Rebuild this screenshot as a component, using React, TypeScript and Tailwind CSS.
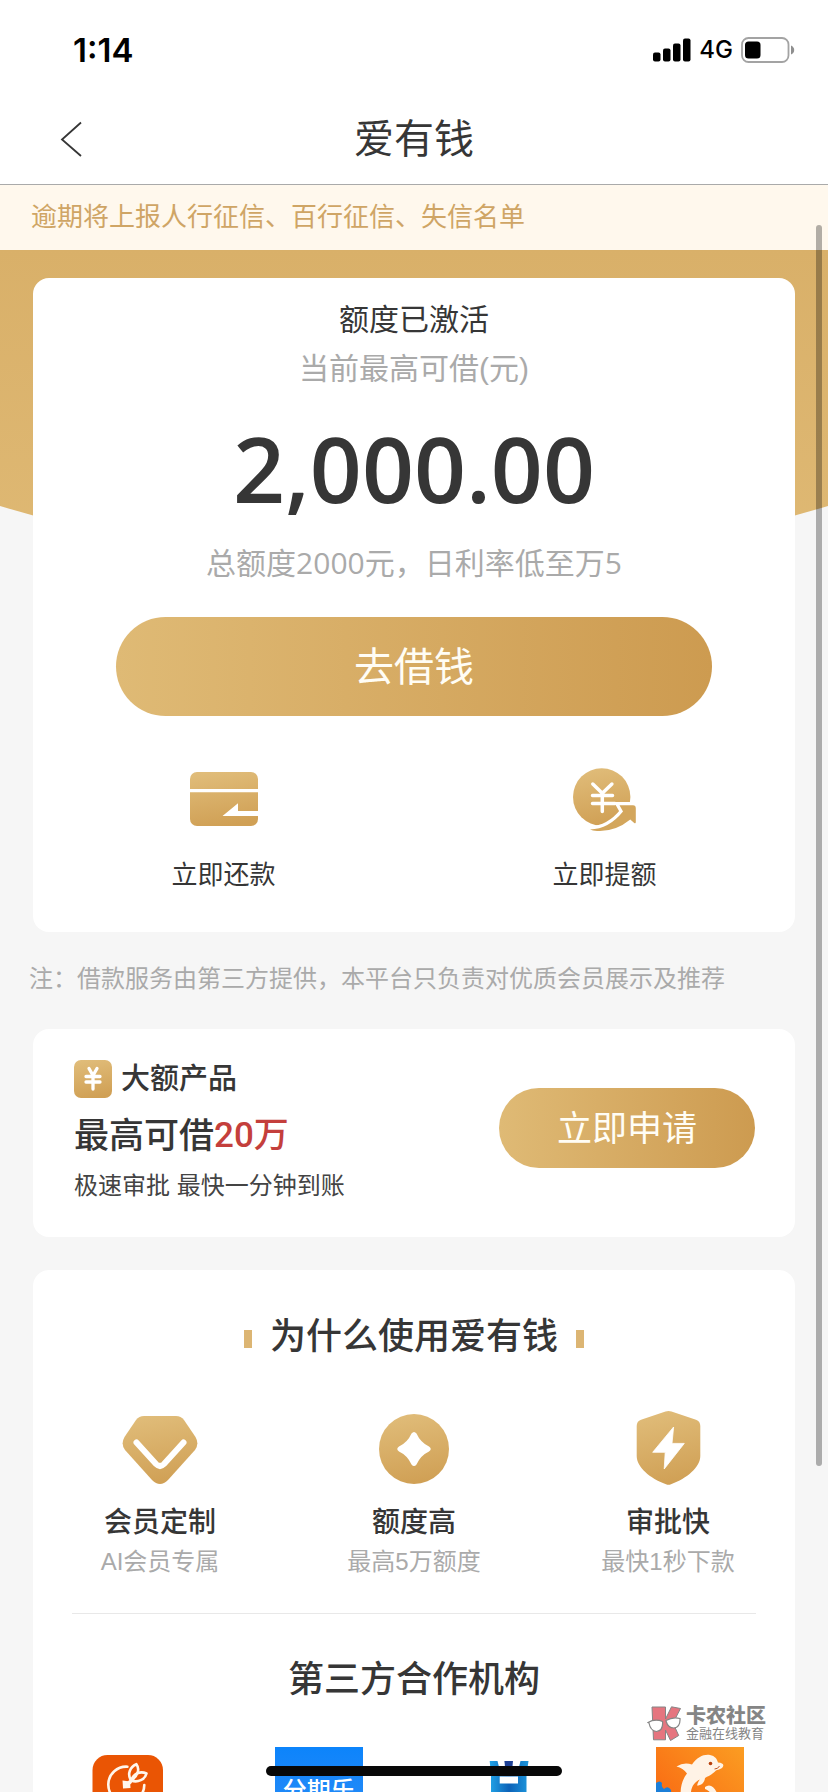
import React from "react";

function GoldGradient({ id }: { id: string }) {
  return (
    <defs>
      <linearGradient id={id} x1="0.3" y1="0" x2="0.5" y2="1">
        <stop offset="0" stopColor="#e0bc79" />
        <stop offset="1" stopColor="#d0a055" />
      </linearGradient>
    </defs>
  );
}

function RepayIcon() {
  return (
    <svg className="h-16 w-[68px]" viewBox="0 0 68 64" aria-hidden="true">
      <GoldGradient id="g-repay" />
      <rect x="0" y="4" width="68" height="54" rx="7" fill="url(#g-repay)" />
      <path d="M0 21H68V24.3H0Z" fill="#fff" />
      <path d="M32.5 48 48 35.3V43H68V48Z" fill="#fff" />
    </svg>
  );
}

function RaiseIcon() {
  const arrow =
    "M48 37.3H60Q62.8 37.3 62.8 40.5V54Q62.8 56 61.2 55L57.3 51.5Q42 64 24 62.9Q19.5 62.5 17 61.4Q36 61 50 43.5L46.5 37.3Z";
  return (
    <svg className="h-16 w-16" viewBox="0 0 64 64" aria-hidden="true">
      <GoldGradient id="g-raise" />
      <circle cx="28.7" cy="28.9" r="28.7" fill="url(#g-raise)" />
      <path d={arrow} fill="#fff" stroke="#fff" strokeWidth="6.5" />
      <path
        d="M19.8 16 29.3 25.2 38.9 16M19.5 27.6H39.5M19.5 35.5H42M29.3 25.2V43.5"
        fill="none"
        stroke="#fff"
        strokeWidth="3.5"
        strokeLinecap="round"
        strokeLinejoin="round"
      />
      <path d={arrow} fill="#d3a65c" />
    </svg>
  );
}

function YuanBadge() {
  return (
    <svg className="size-[38px] shrink-0" viewBox="0 0 38 38" aria-hidden="true">
      <GoldGradient id="g-yuan" />
      <rect width="38" height="38" rx="7" fill="url(#g-yuan)" />
      <path
        d="M15 8.500 19 15.500 23 8.500M12 16.500H26M12 22H26M19 15.500V29"
        fill="none"
        stroke="#fff"
        strokeWidth="3.300"
        strokeLinecap="round"
        strokeLinejoin="round"
      />
    </svg>
  );
}

function DiamondIcon() {
  return (
    <svg className="size-[76px]" viewBox="0 0 76 76" aria-hidden="true">
      <GoldGradient id="g-diamond" />
      <path
        d="M22 6H54Q59 6 62 10L73.500 27Q77.500 34 73 40L46 70Q38 78 30 70L3 40Q-1.500 34 2.500 27L14 10Q17 6 22 6Z"
        fill="url(#g-diamond)"
      />
      <path
        d="M14.500 32.500 34 54Q38 58 42 54L61.500 32.500"
        fill="none"
        stroke="#fff"
        strokeWidth="6"
        strokeLinecap="round"
      />
    </svg>
  );
}

function StarIcon() {
  return (
    <svg className="size-[76px]" viewBox="0 0 76 76" aria-hidden="true">
      <GoldGradient id="g-star" />
      <circle cx="38" cy="39" r="35" fill="url(#g-star)" />
      <path
        d="M35.500 23.500Q38 20.500 40.500 23.500Q44.500 32.500 53 36.500Q56.500 39 53 41.500Q44.500 45.500 40.500 54.500Q38 57.500 35.500 54.500Q31.500 45.500 23 41.500Q19.500 39 23 36.500Q31.500 32.500 35.500 23.500Z"
        fill="#fff"
      />
    </svg>
  );
}

function ShieldIcon() {
  return (
    <svg className="size-[76px]" viewBox="0 0 76 76" aria-hidden="true">
      <GoldGradient id="g-shield" />
      <path
        d="M35.500 1.600Q38.500 .6 41.500 1.600L66 9.700Q70.300 11.300 70.300 16V46C70.300 57 57 68.500 41 74.200Q38.500 75.200 36 74.200C20 68.500 6.700 57 6.700 46V16Q6.700 11.300 11 9.700Z"
        fill="url(#g-shield)"
      />
      <path
        d="M43.600 17 42 33.400H54.300L34.200 59 35.200 42.300H22.700Z"
        fill="#fff"
        stroke="#fff"
        strokeWidth="0.8"
        strokeLinejoin="round"
      />
    </svg>
  );
}

function OrangeLogo() {
  return (
    <svg className="size-[88px]" viewBox="0 0 88 88" aria-hidden="true">
      <rect x="8.500" y="8" width="70.500" height="70.500" rx="15" fill="#ea5504" />
      <g fill="none" stroke="#fff6ec" strokeWidth="2.600" strokeLinecap="round" strokeLinejoin="round">
        <path d="M43.400 19.700A18 18 0 1 0 60.300 38" />
        <path d="M47 33.500C43 27 46 20 52.400 17.200C56 22 54 29 47 33.500Z" />
        <path d="M47 33.500C50 26.500 56 23.500 62.500 26.500C61 32.500 54 36 47 33.500Z" />
        <path d="M46 35 43 37.500" strokeWidth="4" />
      </g>
      <path d="M38.500 33.500 46 34.500 46.500 41 39 41.500Z" fill="#fff6ec" />
    </svg>
  );
}

function FenqileLogo() {
  return (
    <div className="flex size-[88px] justify-center bg-linear-to-b from-[#0c84fb] to-[#2a8df5] pt-[26px] text-[24px] leading-[36px] font-medium text-white">
      分期乐
    </div>
  );
}

function BlueLogo() {
  return (
    <svg className="size-[88px]" viewBox="0 0 88 88" aria-hidden="true">
      <defs>
        <linearGradient id="g-blue" x1="0" y1="0" x2="1" y2="0">
          <stop offset="0" stopColor="#22a3e6" />
          <stop offset="0.5" stopColor="#0c62b8" />
          <stop offset="1" stopColor="#1d96dc" />
        </linearGradient>
      </defs>
      <path
        d="M24.700 14H32.500L35 24H53L55.500 14H63.500L61.500 28V70H54V45H33.500V70H26V28ZM34.700 29.500V36.500H53V29.500Z"
        fill="url(#g-blue)"
        fillRule="evenodd"
      />
      <path d="M39.400 14H48L47 24H40.500Z" fill="#1c3f94" />
    </svg>
  );
}

function DolphinLogo() {
  return (
    <svg className="size-[88px]" viewBox="0 0 88 88" aria-hidden="true">
      <defs>
        <linearGradient id="g-dolphin" x1="1" y1="0" x2="0.2" y2="0.8">
          <stop offset="0" stopColor="#fb9d22" />
          <stop offset="1" stopColor="#f96a13" />
        </linearGradient>
      </defs>
      <rect width="88" height="88" fill="url(#g-dolphin)" />
      <path
        d="M20.500 19.500Q28 14.500 36 17.500C41 10 48 7 54 8C59 9 61 12 62 15.500Q67.500 16 67.300 18.500C67 21.500 63 22.500 60 23.500C56 28 51 29.500 49 31C48.500 36 45 38.500 41 38.500C42 35 43 33.500 44 32.500C38 35 34 41 35 50L26 56C23 45 25 34 31 26.500Q27 21 20.500 19.500Z"
        fill="#fff3e6"
      />
      <circle cx="54.500" cy="16.500" r="1.800" fill="#b8400c" />
      <path d="M58.500 22Q62 22 63.500 19" stroke="#b8400c" strokeWidth="0.900" fill="none" />
      <path d="M49 40C54 36 60 40 62 50H56C55 45 52 43 49 42Z" fill="#fff3e6" />
      <path d="M0 36Q4 33 6 36Q5 40 8 42Q12 38 15 43L16 60H0Z" fill="#1c7fd8" />
    </svg>
  );
}

function Watermark() {
  return (
    <div className="pointer-events-none absolute right-[62px] bottom-[50px] flex items-center gap-1 text-[#858585]">
      <svg className="h-9 w-[35px]" viewBox="0 0 35 36" aria-hidden="true">
        <path
          d="M5 1H18.500V13L24.500 .8 33.500 2.500 26 17 31.700 29.500 23.500 34.500 18.500 24V33.800H6.500Z"
          fill="#e5757f"
          stroke="#858585"
          strokeWidth="1"
        />
        <path
          d="M1 16.500Q8 12.500 15.500 15.500Q16.500 24.500 9.500 25.500Q3.500 25 2 17ZM19 14.500Q26 10.500 33 12.500Q33.500 21 27 22Q21 22 19 15Z"
          fill="#fff"
          stroke="#858585"
          strokeWidth="1.200"
        />
      </svg>
      <div className="flex flex-col">
        <span className="text-[20px] leading-[20px] font-black">卡农社区</span>
        <span className="text-[13px] leading-[16px]">金融在线教育</span>
      </div>
    </div>
  );
}

function StatusBar() {
  return (
    <div className="flex h-[94px] items-center justify-between pt-[6px] pr-[33px] pl-[73px] text-black">
      <span className="font-['Inter',sans-serif] text-[33px] leading-[40px] font-semibold">1:14</span>
      <div className="flex items-center gap-2">
        <svg className="h-6 w-[38px]" viewBox="0 0 38 24" aria-hidden="true">
          <rect x="0" y="14.500" width="7.500" height="9" rx="2" />
          <rect x="10" y="10.500" width="7.500" height="13" rx="2" />
          <rect x="20" y="5.500" width="7.500" height="18" rx="2" />
          <rect x="30" y="0.500" width="7.500" height="23" rx="2" />
        </svg>
        <span className="font-['Inter',sans-serif] text-[24px] leading-[28px] font-medium">4G</span>
        <svg className="h-[26px] w-[54px]" viewBox="0 0 54 26" aria-hidden="true">
          <rect x="1" y="1" width="46.500" height="24" rx="6.500" fill="none" stroke="#a3a3a3" strokeWidth="1.800" />
          <rect x="4" y="4.500" width="15.500" height="17" rx="3.500" />
          <path d="M50 8.500Q53.200 10 53.200 13T50 17.500Z" fill="#8f8f8f" />
        </svg>
      </div>
    </div>
  );
}

const actions = [
  { label: "立即还款", icon: <RepayIcon /> },
  { label: "立即提额", icon: <RaiseIcon /> },
];

const features = [
  { title: "会员定制", text: "AI会员专属", icon: <DiamondIcon /> },
  { title: "额度高", text: "最高5万额度", icon: <StarIcon /> },
  { title: "审批快", text: "最快1秒下款", icon: <ShieldIcon /> },
];

const partners = [<OrangeLogo />, <FenqileLogo />, <BlueLogo />, <DolphinLogo />];

export default function App() {
  return (
    <div className="relative flex h-screen flex-col overflow-hidden bg-[#f6f6f6] font-['Liberation_Sans','Noto_Sans_CJK_SC',sans-serif] text-[#363636]">
      <header className="shrink-0 bg-white">
        <StatusBar />
        <nav className="grid h-[91px] grid-cols-[1fr_auto_1fr] items-center border-b border-[#aaa] pl-[60px]">
          <button type="button" aria-label="返回" className="w-6">
            <svg className="h-9 w-6" viewBox="0 0 24 36" fill="none" stroke="#363636" strokeWidth="1.800" aria-hidden="true">
              <path d="M21 1.500 2 18.500 21 35" />
            </svg>
          </button>
          <h1 className="-ml-[60px] text-[40px] leading-[56px]">爱有钱</h1>
        </nav>
      </header>

      <p className="h-[65px] shrink-0 bg-[#fff8ed] px-[31px] text-[26px] leading-[65px] text-[#cfa565]">
        逾期将上报人行征信、百行征信、失信名单
      </p>

      <main className="relative min-h-0 flex-1 overflow-hidden pt-[28px]">
        <svg
          className="absolute inset-x-0 top-0 h-[330px] w-full"
          viewBox="0 0 828 330"
          preserveAspectRatio="none"
          aria-hidden="true"
        >
          <defs>
            <linearGradient id="g-banner" x1="0" y1="0" x2="0" y2="1">
              <stop offset="0" stopColor="#d9b069" />
              <stop offset="1" stopColor="#dfb974" />
            </linearGradient>
          </defs>
          <path d="M0 0H828V256Q414 380 0 256Z" fill="url(#g-banner)" />
        </svg>

        <section className="relative mx-[33px] rounded-2xl bg-white pt-[21px] pb-[39px] text-center">
          <h2 className="text-[30px] leading-[42px]">额度已激活</h2>
          <p className="mt-[7px] text-[30px] leading-[42px] text-[#aaa]">当前最高可借(元)</p>
          <p className="mt-[30px] font-['Open_Sans',sans-serif] text-[91px] leading-[96px] font-semibold">2,000.00</p>
          <p className="mt-[26px] font-['Open_Sans','Noto_Sans_CJK_SC',sans-serif] text-[30px] leading-[42px] text-[#aaa]">
            总额度2000元，日利率低至万5
          </p>
          <div className="mt-[33px] px-[83px]">
            <button
              type="button"
              className="h-[99px] w-full rounded-full bg-linear-to-r from-[#dfba75] to-[#cd9b50] text-[40px] leading-[56px] text-[#fffdf5]"
            >
              去借钱
            </button>
          </div>
          <div className="mt-[52px] grid grid-cols-2">
            {actions.map((a) => (
              <button key={a.label} type="button" className="flex flex-col items-center gap-[25px]">
                {a.icon}
                <span className="text-[26px] leading-[36px]">{a.label}</span>
              </button>
            ))}
          </div>
        </section>

        <p className="mt-[30px] px-[29px] text-[24px] leading-[34px] text-[#aaa]">
          注：借款服务由第三方提供，本平台只负责对优质会员展示及推荐
        </p>

        <section className="mx-[33px] mt-[33px] flex items-start justify-between rounded-2xl bg-white pt-[31px] pr-[40px] pb-[33px] pl-[41px]">
          <div>
            <div className="flex items-center gap-[9px]">
              <YuanBadge />
              <h3 className="text-[29px] leading-[38px] font-medium">大额产品</h3>
            </div>
            <p className="mt-[14px] flex text-[35px] leading-[48px] font-medium">
              最高可借<span className="font-['Roboto','Noto_Sans_CJK_SC',sans-serif] text-[#c43f3c]">20万</span>
            </p>
            <p className="mt-2 text-[24px] leading-[36px] text-[#444]">极速审批 最快一分钟到账</p>
          </div>
          <button
            type="button"
            className="mt-7 h-20 w-64 rounded-full bg-linear-to-r from-[#dfba75] to-[#cd9b50] pt-[2px] text-[35px] leading-[48px] text-[#fffdf5]"
          >
            立即申请
          </button>
        </section>

        <section className="mx-[33px] mt-[33px] rounded-2xl bg-white pt-[43px] pb-10 text-center">
          <div className="flex items-center justify-center gap-[18px]">
            <i className="mt-1 h-[18px] w-2 bg-[#dcb573]" />
            <h2 className="text-[36px] leading-[48px] font-medium">为什么使用爱有钱</h2>
            <i className="mt-1 h-[18px] w-2 bg-[#dcb573]" />
          </div>
          <ul className="mt-[49px] grid grid-cols-3">
            {features.map((f) => (
              <li key={f.title} className="flex flex-col items-center">
                {f.icon}
                <h3 className="mt-[18px] text-[28px] leading-[38px] font-medium">{f.title}</h3>
                <p className="mt-[3px] text-[24px] leading-[34px] text-[#aaa]">{f.text}</p>
              </li>
            ))}
          </ul>
          <hr className="mx-[39px] mt-[34px] border-[#e8e8e8]" />
          <h2 className="mt-[42px] text-[36px] leading-[48px] font-medium">第三方合作机构</h2>
          <ul className="mt-[43px] grid grid-cols-4">
            {partners.map((logo, i) => (
              <li key={i} className="flex justify-center">
                {logo}
              </li>
            ))}
          </ul>
        </section>
      </main>

      <Watermark />
      <div className="absolute top-[225px] right-[6px] bottom-[326px] w-[6px] rounded-full bg-black/30" />
      <div className="absolute inset-x-0 bottom-4 flex justify-center">
        <div className="h-[10px] w-[296px] rounded-full bg-[#080808]" />
      </div>
    </div>
  );
}
